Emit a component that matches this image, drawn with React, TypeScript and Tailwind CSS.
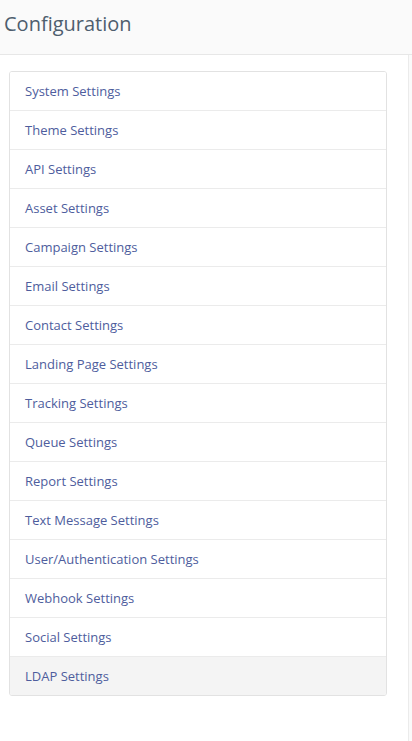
import React from "react";

const items = [
  "System Settings",
  "Theme Settings",
  "API Settings",
  "Asset Settings",
  "Campaign Settings",
  "Email Settings",
  "Contact Settings",
  "Landing Page Settings",
  "Tracking Settings",
  "Queue Settings",
  "Report Settings",
  "Text Message Settings",
  "User/Authentication Settings",
  "Webhook Settings",
  "Social Settings",
  "LDAP Settings",
];

export default function App() {
  const active = "LDAP Settings";

  return (
    <div className="min-h-[741px] bg-white font-['Open_Sans',sans-serif]">
      <div className="h-[55px] bg-[#fafafa] border-b border-[#e7e7e7] flex items-center px-[4px]">
        <h3 className="text-[20px] text-[#4e5e6e] leading-none -mt-[6px]">Configuration</h3>
      </div>
      <div className="flex min-h-[686px]">
        <div className="w-[408px] pl-[9px] pr-[21px] pt-[16px]">
          <div className="border border-[#e2e2e2] rounded-[3px] overflow-hidden">
            {items.map((item, i) => (
              <a
                key={item}
                href="#"
                className={
                  "block px-[15px] pt-[10px] text-[13px] leading-[19px] text-[#4e5d9d] " +
                  (i > 0 ? "h-[39px] border-t border-[#ebebeb] " : "h-[38px] ") +
                  (item === active ? "bg-[#f4f4f4]" : "bg-white")
                }
              >
                {item}
              </a>
            ))}
          </div>
        </div>
        <div className="flex-1 bg-[#fafafa] border-l border-[#ebebeb]" />
      </div>
    </div>
  );
}
